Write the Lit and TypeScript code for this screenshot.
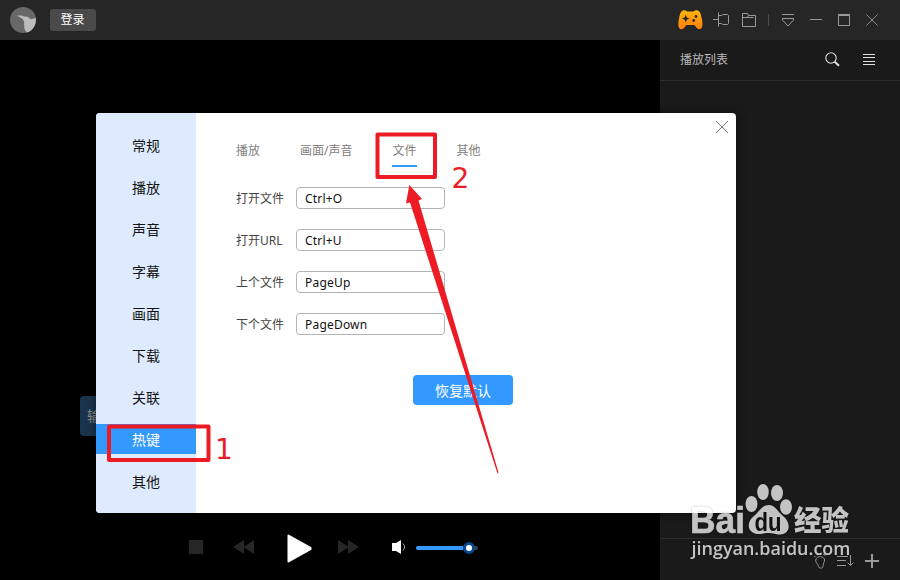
import { LitElement, html, css, svg } from "lit";
import { customElement, property, state } from "lit/decorators.js";
import { classMap } from "lit/directives/class-map.js";

const icons: Record<string, unknown> = {
  logo: svg`<svg width="26" height="26" viewBox="0 0 26 26"><circle cx="13" cy="13" r="13" fill="#686868"/><path d="M7 8.7C10 8.2 13 8.4 14 9.6C16 9.3 18 9.7 19.5 11.2C21 12.8 23 12 25.6 10.5C27 17 22.5 24.5 16.8 25.4C13.6 22.5 14.3 19 14.2 15.8C14.1 12.6 12 11 7 8.7Z" fill="#bcbcbc"/></svg>`,
  game: svg`<svg width="25" height="20" viewBox="0 0 26 20" preserveAspectRatio="none"><defs><linearGradient id="g" x2="0" y2="1"><stop stop-color="#ffb60a"/><stop offset="1" stop-color="#ff7d0c"/></linearGradient></defs><path d="M5 .5C7 0 8 .3 9.5 1.5H16C18 .2 20 0 21.5 1C23.3 2 23.9 5 24.6 8C25.600 12 26 17 24 18.600C21.700 20.300 19.700 18.500 18.600 16.800C17.700 15.300 17 15 15.500 15H10C8.800 15 8 15.300 7.200 16.800C6.100 18.500 4 20 2 18.700C-.4 17 .2 12.5 1.1 8.500C1.800 5 2.500 1.500 5 .5Z" fill="url(#g)"/><path d="M8 4.700L9.200 7.400L12 8.600L9.200 9.800L8 12.500L6.800 9.800L4 8.600L6.800 7.400Z" fill="#2b2621"/><circle cx="18.700" cy="6.500" r="1.400" fill="#2b2621"/><circle cx="16.300" cy="10.500" r="1.400" fill="#2b2621"/></svg>`,
  pin: svg`<svg width="17" height="15" viewBox="0 0 17 15" fill="none" stroke="#999"><path d="M0 7.5H5.5M5.500 .5V14.500M5.500 11.500H8.500L10 12.500H14.500L15.500 11.500V3.500L14.500 2.500H10L8.500 3.500H5.500"/></svg>`,
  folder: svg`<svg width="14" height="14" viewBox="0 0 14 14" fill="none" stroke="#999"><path d="M.5 .5H5.5L6.500 2.500H13.500V13.500H.5ZM.5 4.500H5L6.500 2.500M5 4.500H11.500"/></svg>`,
  menuDown: svg`<svg width="12" height="13" viewBox="0 0 12 13" fill="none" stroke="#999"><path d="M0 .5H12M.5 4.500H11.500V6L6 12L.5 6Z"/></svg>`,
  min: svg`<svg width="12" height="13"><path d="M0 5.5H12" stroke="#999"/></svg>`,
  max: svg`<svg width="12" height="12" fill="none" stroke="#999"><path d="M.5 .5H11.5V11.5H.5ZM0 1.5H12"/></svg>`,
  close: svg`<svg width="12" height="12"><path d="M.3 .3L11.7 11.7M11.7 .3L.3 11.7" stroke="#878787"/></svg>`,
  search: svg`<svg width="15" height="15" viewBox="0 0 15 15" fill="none" stroke="#e0e0e0"><circle cx="6" cy="6" r="5.2" stroke-width="1.1"/><path d="M9.7 9.7L14 13.8" stroke-width="2"/></svg>`,
  list: svg`<svg width="12" height="11"><path d="M0 .5H12M0 3.5H12M0 7.500H12M0 10.500H12" stroke="#e0e0e0"/></svg>`,
  stop: svg`<svg width="14" height="14"><path d="M0 0H14V14H0Z" fill="#262626"/></svg>`,
  prev: svg`<svg width="22" height="14"><path d="M11 0V14L0 7ZM21 0V14L10.5 7Z" fill="#262626"/></svg>`,
  play: svg`<svg width="25" height="29"><path d="M1.5 1.5L23.5 13.8V15.2L1.5 27.5Z" fill="#fff" stroke="#fff" stroke-width="2" stroke-linejoin="round"/></svg>`,
  next: svg`<svg width="22" height="14"><path d="M0 0V14L11 7ZM10 0V14L21 7Z" fill="#262626"/></svg>`,
  volume: svg`<svg width="14" height="14"><path d="M0 3H4L9 0V14L4 11H0Z" fill="#fff"/><path d="M10.8 3.5Q14.5 7 10.8 10.5" fill="none" stroke="#aaa"/></svg>`,
  foot: svg`<svg width="12" height="16" viewBox="0 0 12 16" fill="none" stroke="#999"><path d="M3.3 4.5C5.5 2.7 10.5 4 10.6 7C10.7 9 9 10 9.2 12.5C9.2 16 4.5 16 4.2 12.7C4 10.5 1.5 10 1.7 7.5Q1.8 5.5 3.3 4.5Z"/><path d="M.4 3.5H1.5M2.8 1.8H4M5.5 .8H7M8.8 1.2H11V3"/></svg>`,
  sort: svg`<svg width="17" height="12" fill="none" stroke="#999"><path d="M0 1.5H11M0 5.5H9M0 10.5H9M13.5 0V10M10.5 7.5L13.5 10.5L16.5 7.5"/></svg>`,
  plus: svg`<svg width="14" height="14"><path d="M7 0V14M0 7H14" stroke="#999" stroke-width="2"/></svg>`,
};

@customElement("title-bar")
class TitleBar extends LitElement {
  static styles = css`
    :host { display: flex; align-items: center; height: 40px; background: #262626; padding: 0 22px 0 10px; box-sizing: border-box; }
    svg { display: block; flex: none; }
    .login { width: 46px; height: 22px; margin-left: 14px; padding: 0 1px 0 0; border: 0; border-radius: 3px; background: #4a4a4a; color: #fff; font: 12px/20px "Liberation Sans", "Noto Sans CJK SC", sans-serif; }
    .tools { display: flex; align-items: center; margin-left: auto; }
    .pin { margin: -1px 0 0 10px; }
    .folder { margin: -1px 0 0 12px; }
    .rule { width: 1px; height: 12px; background: #4d4d4d; margin: 0 13px 0 12px; }
    .gap { margin-left: 16px; }
  `;
  render() {
    return html`${icons.logo}<button class="login">登录</button>
      <div class="tools">
        ${icons.game}<span class="pin">${icons.pin}</span><span class="folder">${icons.folder}</span>
        <span class="rule"></span>${icons.menuDown}<span class="gap">${icons.min}</span>
        <span class="gap">${icons.max}</span><span class="gap">${icons.close}</span>
      </div>`;
  }
}

@customElement("play-list")
class PlayList extends LitElement {
  static styles = css`
    :host { display: flex; flex-direction: column; justify-content: space-between; width: 240px; background: #1a1a1a; }
    svg { display: block; }
    header { display: flex; align-items: center; height: 38px; padding: 0 25px 2px 20px; border-bottom: 1px solid #2d2d2d; color: #b8b8b8; font: 12px/38px "Liberation Sans", "Noto Sans CJK SC", sans-serif; }
    .title { padding-top: 2px; }
    .search { margin: 0 23px 0 auto; }
    footer { display: flex; align-items: center; justify-content: flex-end; gap: 11px; height: 42px; padding: 2px 21px 0 0; box-sizing: border-box; border-top: 1px solid #2d2d2d; }
  `;
  render() {
    return html`<header><span class="title">播放列表</span><span class="search">${icons.search}</span>${icons.list}</header>
      <footer>${icons.foot}${icons.sort}${icons.plus}</footer>`;
  }
}

@customElement("player-controls")
class PlayerControls extends LitElement {
  static styles = css`
    :host { display: flex; align-items: center; height: 66px; padding-left: 189px; }
    svg { display: block; }
    .a { margin-left: 30px; }
    .b { margin: 2px 0 0 32px; }
    .c { margin-left: 26px; }
    .d { margin-left: 32px; }
    .track { display: flex; align-items: center; width: 62px; height: 4px; margin: 2px 0 0 10px; border-radius: 2px; background: #404040; }
    .level { width: 47px; height: 4px; border-radius: 2px 0 0 2px; background: #3399ff; }
    .knob { flex: none; width: 6px; height: 6px; border: 3px solid #0b478e; border-radius: 50%; background: #fff; }
  `;
  render() {
    return html`${icons.stop}<span class="a">${icons.prev}</span><span class="b">${icons.play}</span>
      <span class="c">${icons.next}</span><span class="d">${icons.volume}</span>
      <div class="track"><div class="level"></div><div class="knob"></div></div>`;
  }
}

@customElement("settings-dialog")
class SettingsDialog extends LitElement {
  @property() section = "热键";
  @state() private tab = "文件";
  private sections = ["常规", "播放", "声音", "字幕", "画面", "下载", "关联", "热键", "其他"];
  private tabs = ["播放", "画面/声音", "文件", "其他"];
  private keys = [["打开文件", "Ctrl+O"], ["打开URL", "Ctrl+U"], ["上个文件", "PageUp"], ["下个文件", "PageDown"]];

  static styles = css`
    :host { display: flex; width: 640px; height: 400px; border-radius: 4px; overflow: hidden; background: #fff; color: #444; box-shadow: 0 0 10px rgba(0,0,0,.5); font: 12px/20px "Noto Sans", "Noto Sans CJK SC", sans-serif; }
    nav { display: flex; flex-direction: column; gap: 12px; width: 100px; padding-top: 17px; box-sizing: border-box; background: #deebff; color: #151515; font-size: 14px; line-height: 32px; text-align: center; }
    .item { height: 30px; cursor: default; }
    .item.on { background: #3399ff; color: #fff; }
    main { position: relative; flex: 1; padding: 27px 0 0 40px; }
    .close { position: absolute; top: 8px; right: 8px; display: block; }
    .tabs { display: flex; gap: 40px; height: 27px; color: #808080; line-height: 22px; }
    .tab { height: 25px; border-bottom: 2px solid transparent; }
    .tab.on { border-color: #3399ff; }
    .rows { display: flex; flex-direction: column; gap: 20px; margin-top: 20px; }
    .row { display: flex; align-items: center; height: 22px; }
    .label { width: 60px; padding-top: 1px; white-space: nowrap; }
    .field { width: 149px; height: 22px; padding: 1px 8px 0; box-sizing: border-box; border: 1px solid #b4b4b4; border-radius: 4px; color: #111; letter-spacing: .2px; }
    .reset { display: block; width: 100px; height: 30px; margin: 40px 0 0 177px; padding: 0; border: 0; border-radius: 4px; background: #3399ff; color: #fff; font: 14px/30px "Noto Sans CJK SC", sans-serif; }
  `;
  render() {
    return html`<nav>${this.sections.map((s) => html`<div class=${classMap({ item: true, on: s === this.section })} @click=${() => (this.section = s)}>${s}</div>`)}</nav>
      <main>
        <svg class="close" width="12" height="12"><path d="M0 0L12 12M12 0L0 12" stroke="#777"/></svg>
        <div class="tabs">${this.tabs.map((t) => html`<div class=${classMap({ tab: true, on: t === this.tab })} @click=${() => (this.tab = t)}>${t}</div>`)}</div>
        <div class="rows">${this.keys.map(([l, k]) => html`<div class="row"><span class="label">${l}</span><div class="field">${k}</div></div>`)}</div>
        <button class="reset">恢复默认</button>
      </main>`;
  }
}

@customElement("app-root")
class AppRoot extends LitElement {
  static styles = css`
    :host { position: relative; display: flex; flex-direction: column; width: 900px; height: 580px; overflow: hidden; background: #000; }
    .body { display: flex; flex: 1; }
    .stage { display: flex; flex-direction: column; justify-content: flex-end; width: 660px; }
    .toast { position: absolute; left: 80px; top: 396px; width: 80px; height: 40px; padding-left: 7px; box-sizing: border-box; border-radius: 4px; background: #1b344e; color: #8b8b8b; font: 14px/39px "Noto Sans CJK SC", sans-serif; }
    settings-dialog { position: absolute; left: 96px; top: 113px; }
    .overlay { position: absolute; left: 0; top: 0; pointer-events: none; }
    .note { font: 28px "DejaVu Sans", sans-serif; fill: #ed1c24; }
    .mark { fill: #fff; opacity: .74; filter: drop-shadow(0 0 1px rgba(0,0,0,.35)); }
    .brand { font: bold 36px "Liberation Sans", sans-serif; stroke: #fff; stroke-width: .6px; }
    .cn { font: 900 28px "Noto Sans CJK SC", sans-serif; }
    .du { font: bold 25px "Liberation Sans", sans-serif; fill: #0e0e0e; }
    .url { font: 600 18px "Open Sans", sans-serif; }
  `;
  render() {
    return html`<title-bar></title-bar>
      <div class="body"><div class="stage"><player-controls></player-controls></div><play-list></play-list></div>
      <div class="toast">输入</div>
      <settings-dialog></settings-dialog>
      <svg class="overlay" width="900" height="580">
        <g class="mark">
          <text class="brand" x="690" y="533" textLength="55" lengthAdjust="spacingAndGlyphs">Bai</text>
          <ellipse cx="751.5" cy="504" rx="6" ry="8"/><ellipse cx="763" cy="492" rx="5.8" ry="8"/>
          <ellipse cx="777" cy="493" rx="6" ry="8"/><ellipse cx="786" cy="507" rx="6" ry="7.8"/>
          <path d="M769 505C775 505 777 511 783 516C791 522 791 534 780 534.500C775 534.500 774 533 768 533C763 533 762 534.500 757 534C746 532 747 521 754 516C760 511 762 505 769 505Z"/>
          <text class="du" x="754.500" y="530.500" textLength="27" lengthAdjust="spacingAndGlyphs">du</text>
          <text class="cn" x="794" y="531" textLength="55" lengthAdjust="spacingAndGlyphs">经验</text>
          <text class="url" x="691.500" y="555" textLength="159" lengthAdjust="spacingAndGlyphs">jingyan.baidu.com</text>
        </g>
        <g fill="none" stroke="#ed1c24" stroke-width="4" stroke-linejoin="round">
          <rect x="109" y="426.500" width="99.500" height="33.500"/>
          <rect x="377.500" y="134.500" width="57.500" height="42.500"/>
        </g>
        <path d="M409.300 185L422 199L418.500 200.500L498.500 472.500L497.500 473.500L410 202.500L406 203.500Z" fill="#ed1c24"/>
        <text class="note" x="215" y="459">1</text>
        <text class="note" x="451.500" y="188">2</text>
      </svg>`;
  }
}
